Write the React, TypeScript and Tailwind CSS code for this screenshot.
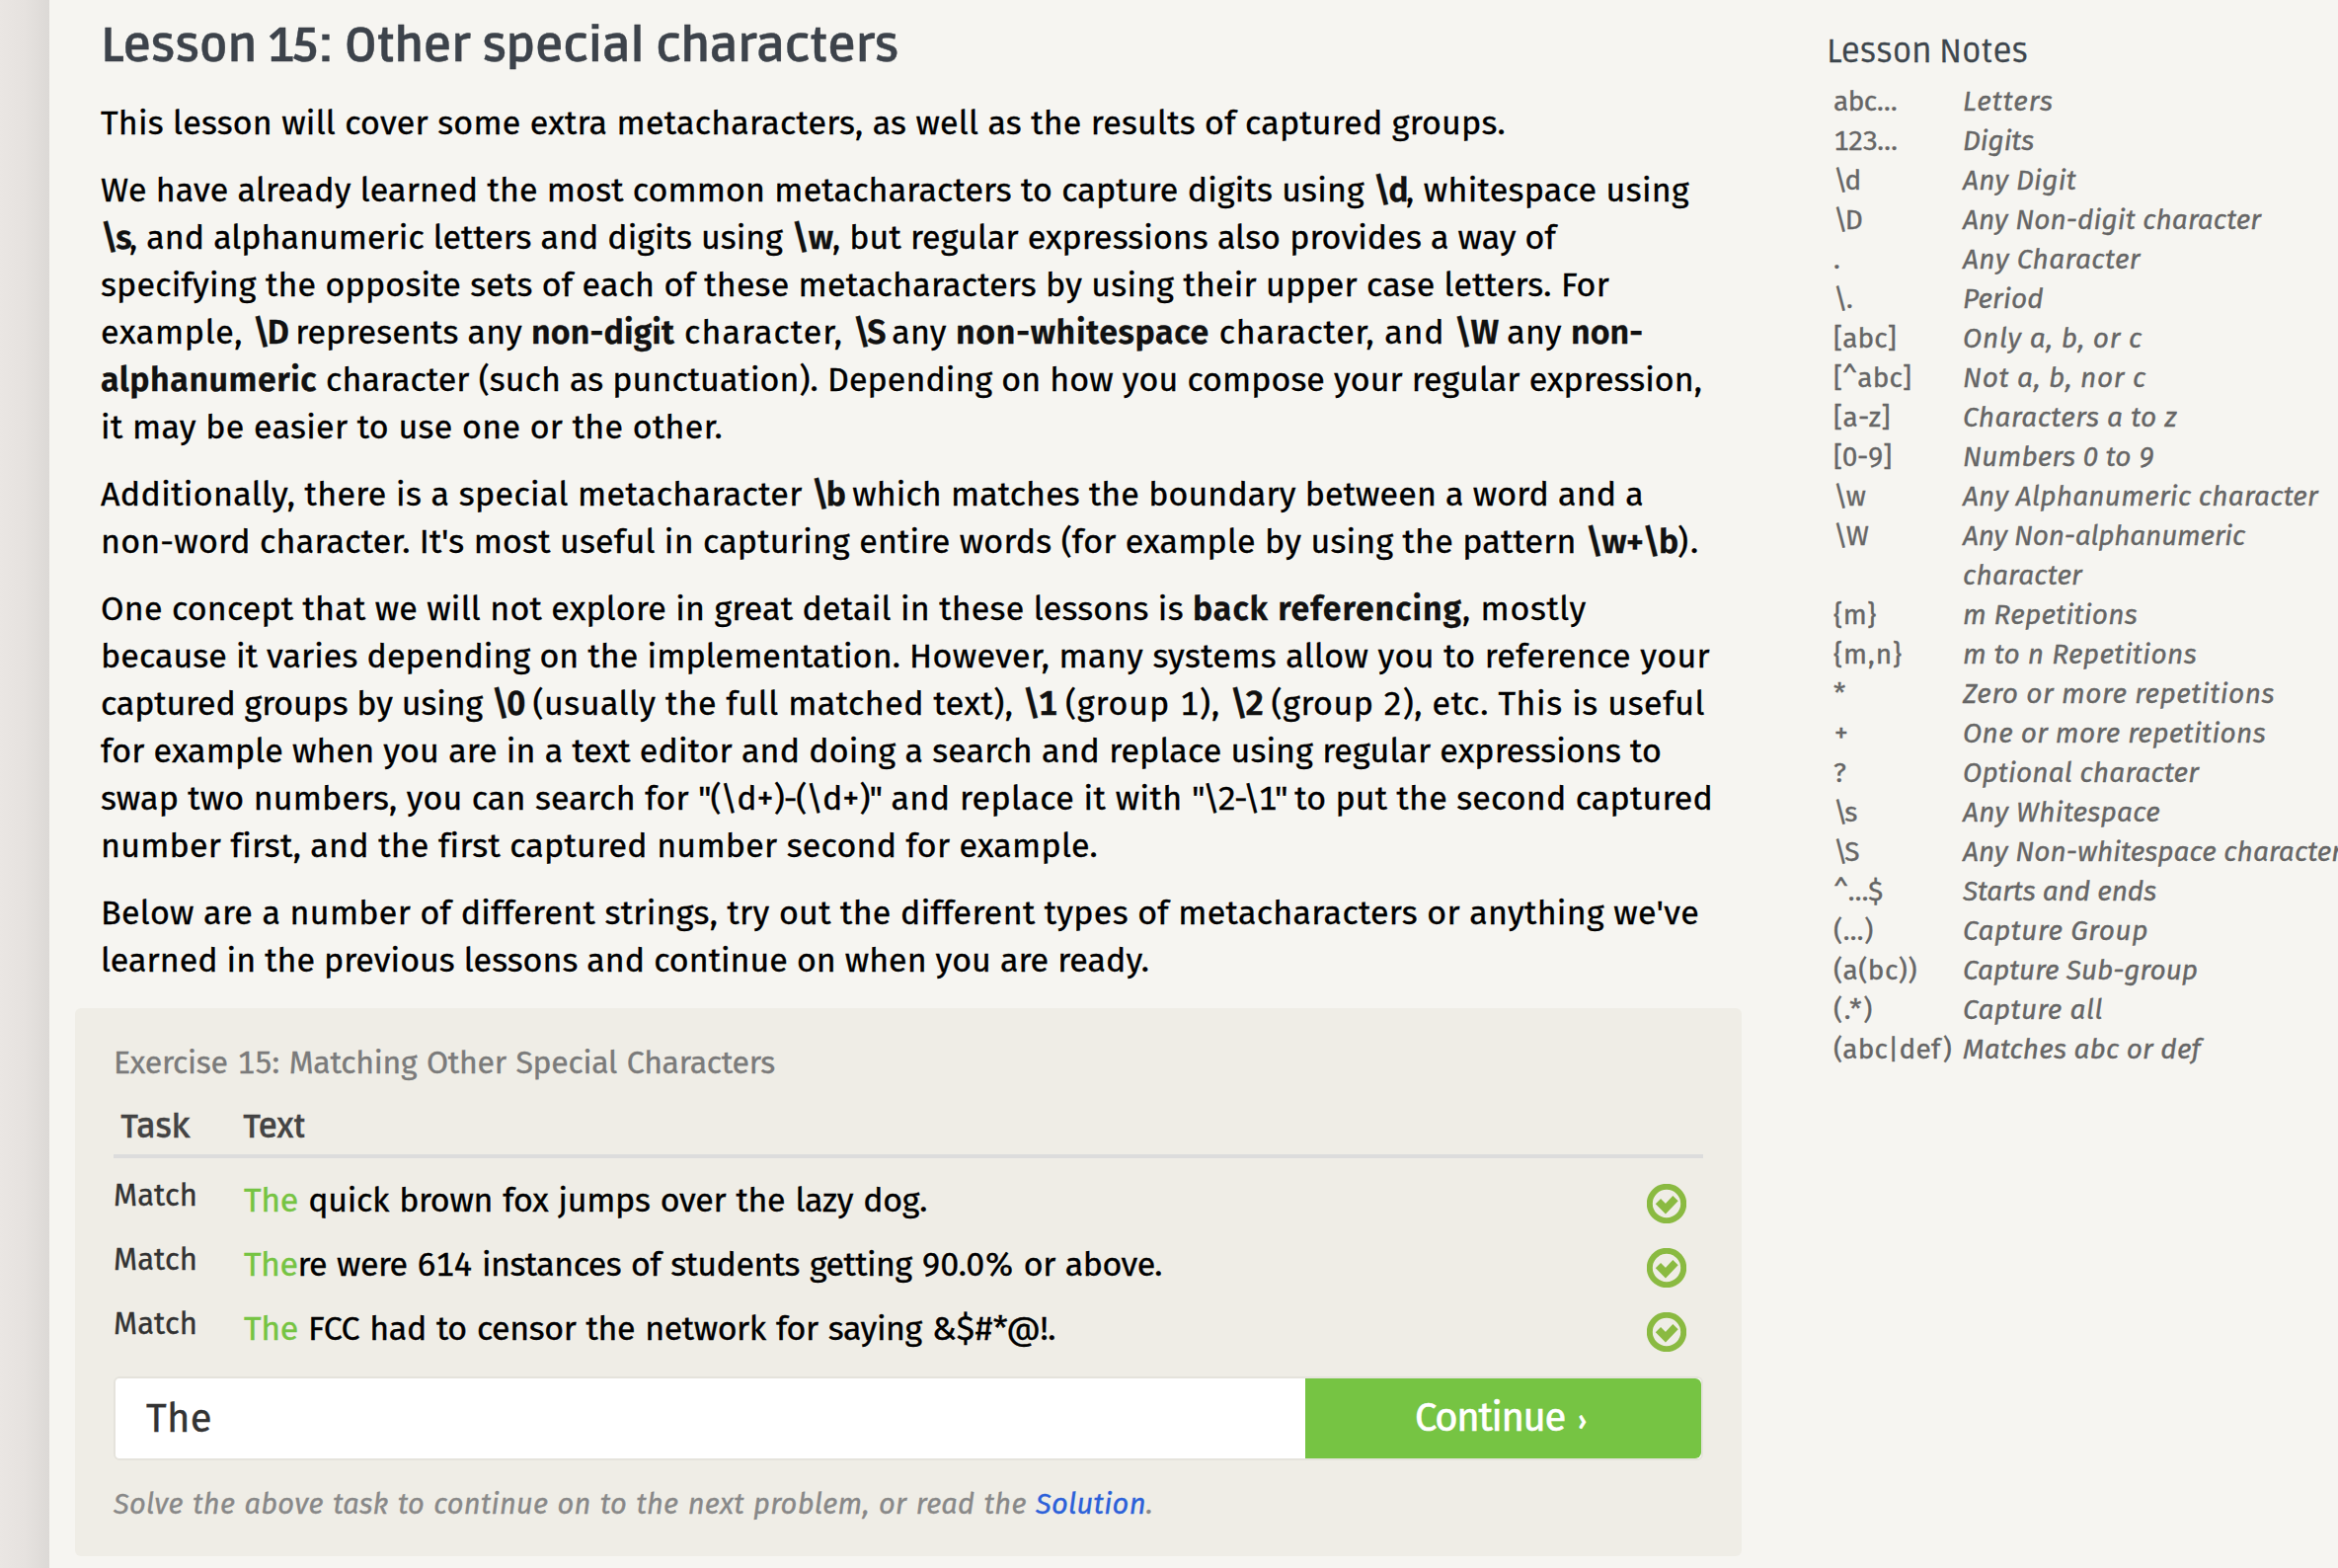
import { useLayoutEffect, useRef, type ReactNode } from "react";

/** A run of text whose tracking is adjusted so that it fills `w` pixels. */
function Fit({ w, className = "", children }: { w: number; className?: string; children: ReactNode }) {
  const ref = useRef<HTMLSpanElement>(null);
  useLayoutEffect(() => {
    const el = ref.current;
    if (!el) return;
    el.style.letterSpacing = "0px";
    const count = (el.textContent ?? "").length;
    if (count > 1) {
      el.style.letterSpacing = `${(w - el.getBoundingClientRect().width) / count}px`;
    }
  }, [w]);
  return (
    <span ref={ref} className={`inline-block whitespace-pre ${className}`}>
      {children}
    </span>
  );
}

type Run = [number, string, "b"?];
type Line = [number, string];

const paragraphs: Run[][][] = [
  [[[1423, "This lesson will cover some extra metacharacters, as well as the results of captured groups."]]],
  [
    [[1289, "We have already learned the most common metacharacters to capture digits using "], [33, "\\d", "b"], [287, ", whitespace using"]],
    [[29, "\\s", "b"], [671, ", and alphanumeric letters and digits using "], [41, "\\w", "b"], [733, ", but regular expressions also provides a way of"]],
    [[1528, "specifying the opposite sets of each of these metacharacters by using their upper case letters. For"]],
    [
      [154, "example, "], [34, "\\D", "b"], [248, " represents any "], [145, "non-digit", "b"], [181, " character, "], [30, "\\S", "b"],
      [74, " any "], [257, "non-whitespace", "b"], [248, " character, and "], [44, "\\W", "b"], [74, " any "], [73, "non-", "b"],
    ],
    [[219, "alphanumeric", "b"], [1403, " character (such as punctuation). Depending on how you compose your regular expression,"]],
    [[630, "it may be easier to use one or the other."]],
  ],
  [
    [[720, "Additionally, there is a special metacharacter "], [32, "\\b", "b"], [811, " which matches the boundary between a word and a"]],
    [[1504, "non-word character. It's most useful in capturing entire words (for example by using the pattern "], [93, "\\w+\\b", "b"], [23, ")."]],
  ],
  [
    [[1106, "One concept that we will not explore in great detail in these lessons is "], [273, "back referencing", "b"], [126, ", mostly"]],
    [[819, "because it varies depending on the implementation. "], [811, "However, many systems allow you to reference your"]],
    [
      [396, "captured groups by using "], [32, "\\0", "b"], [506, " (usually the full matched text), "], [33, "\\1", "b"],
      [177, " (group 1), "], [32, "\\2", "b"], [449, " (group 2), etc. This is useful"],
    ],
    [[1581, "for example when you are in a text editor and doing a search and replace using regular expressions to"]],
    [
      [605, "swap two numbers, you can search for "], [186, "\"(\\d+)-(\\d+)\""], [314, " and replace it with "],
      [95, "\"\\2-\\1\""], [433, " to put the second captured"],
    ],
    [[1007, "number first, and the first captured number second for example."]],
  ],
  [
    [[1619, "Below are a number of different strings, try out the different types of metacharacters or anything we've"]],
    [[1062, "learned in the previous lessons and continue on when you are ready."]],
  ],
];

const notes: [string, number, Line[]][] = [
  ["abc…", 64, [[92, "Letters"]]],
  ["123…", 64, [[72, "Digits"]]],
  ["\\d", 25, [[115, "Any Digit"]]],
  ["\\D", 27, [[302, "Any Non-digit character"]]],
  [".", 10, [[180, "Any Character"]]],
  ["\\.", 18, [[82, "Period"]]],
  ["[abc]", 64, [[182, "Only a, b, or c"]]],
  ["[^abc]", 79, [[186, "Not a, b, nor c"]]],
  ["[a-z]", 58, [[217, "Characters a to z"]]],
  ["[0-9]", 59, [[194, "Numbers 0 to 9"]]],
  ["\\w", 31, [[360, "Any Alphanumeric character"]]],
  ["\\W", 34, [[286, "Any Non-alphanumeric"], [121, "character"]]],
  ["{m}", 44, [[177, "m Repetitions"]]],
  ["{m,n}", 70, [[237, "m to n Repetitions"]]],
  ["*", 10, [[316, "Zero or more repetitions"]]],
  ["+", 15, [[307, "One or more repetitions"]]],
  ["?", 10, [[239, "Optional character"]]],
  ["\\s", 21, [[200, "Any Whitespace"]]],
  ["\\S", 23, [[384, "Any Non-whitespace character"]]],
  ["^…$", 50, [[196, "Starts and ends"]]],
  ["(…)", 41, [[188, "Capture Group"]]],
  ["(a(bc))", 85, [[238, "Capture Sub-group"]]],
  ["(.*)", 41, [[142, "Capture all"]]],
  ["(abc|def)", 120, [[241, "Matches abc or def"]]],
];

const tasks: [number, string, string][] = [
  [692, "The", " quick brown fox jumps over the lazy dog."],
  [930, "The", "re were 614 instances of students getting 90.0% or above."],
  [822, "The", " FCC had to censor the network for saying &$#*@!."],
];

function CheckBadge() {
  return (
    <svg viewBox="0 0 40 40" className="size-10">
      <circle cx="20" cy="20" r="17.2" fill="none" stroke="#8aba41" strokeWidth="6" />
      <path d="M11.4 17.6 L18.9 25.2 L29 14.6" fill="none" stroke="#8aba41" strokeWidth="7.4" />
    </svg>
  );
}

export default function App() {
  return (
    <div className="flex h-[1588px] w-[2368px] overflow-hidden bg-[#f6f5f1] font-['Fira_Sans','Lato',sans-serif] tabular-nums [-webkit-text-stroke:0.35px]">
      <div className="w-[50px] shrink-0 bg-linear-to-r from-[#eae6e3] via-[#e6e2df] via-50% to-[#dcd9d6]" />

      <main className="w-[1714px] shrink-0 pl-[26px]">
        <div className="pl-[26px]">
          <h1 className="h-[101px] pt-[13px] font-['Ruda','Open_Sans',sans-serif] text-[49px] leading-[68px] font-bold text-[#3d434b] [-webkit-text-stroke:0.4px]">
            <Fit w={808}>Lesson 15: Other special characters</Fit>
          </h1>
          {paragraphs.map((lines, i) => (
            <p key={i} className="mb-5 text-[34px] leading-[48px] text-black">
              {lines.map((runs, j) => (
                <span key={j} className="block h-12 whitespace-nowrap">
                  {runs.map(([w, text, bold], k) => (
                    <Fit key={k} w={w} className={bold ? "font-semibold text-[#111]" : ""}>{text}</Fit>
                  ))}
                </span>
              ))}
            </p>
          ))}
        </div>

        <section className="mt-6 h-[555px] rounded-md bg-[#efede6] px-[39px] pt-[31px] [word-spacing:1.5px]">
          <h2 className="h-12 text-[32px] leading-[48px] text-[#7b7b7b]">
            <Fit w={670}>Exercise 15: Matching Other Special Characters</Fit>
          </h2>
          <div className="mt-[14px] flex h-[59px] border-b-4 border-[#dcdcdc] pt-[2px] font-['Ruda','Open_Sans',sans-serif] text-[33px] leading-[53px] font-bold text-[#444]">
            <div className="w-[132px] pl-[8px]"><Fit w={69}>Task</Fit></div>
            <div><Fit w={62}>Text</Fit></div>
          </div>
          <div className="pt-[15px]">
            {tasks.map(([w, hit, rest]) => (
              <div key={rest} className="flex h-[65px]">
                <div className="w-[132px] pt-px text-[31px] leading-[44px] text-[#333]"><Fit w={85}>Match</Fit></div>
                <div className="flex-1 pt-[4px] text-[34px] leading-[48px] text-black">
                  <Fit w={w}><span className="text-[#76c443]">{hit}</span>{rest}</Fit>
                </div>
                <div className="pt-[11px] pr-[17px]"><CheckBadge /></div>
              </div>
            ))}
          </div>
          <div className="mt-[11px] flex h-[85px] overflow-hidden rounded-md border-2 border-[#e5e3dc] bg-white">
            <div className="flex-1 pt-px pl-[31px] text-[40px] leading-[80px] text-[#333]"><Fit w={67}>The</Fit></div>
            <button className="flex w-[401px] gap-[13px] rounded-r-md bg-[#76c443] pl-[111px] text-[40px] leading-[80px] text-white [-webkit-text-stroke:0.6px]">
              <Fit w={152}>Continue</Fit>
              <span className="pt-px font-['Lato',sans-serif] text-[32px] font-bold">›</span>
            </button>
          </div>
          <p className="mt-[23px] text-[29px] leading-[44px] text-[#888] italic">
            <Fit w={1053}>Solve the above task to continue on to the next problem, or read the <a className="text-[#2b60d9]">Solution</a>.</Fit>
          </p>
        </section>
      </main>

      <aside className="shrink-0 pt-[27px] pl-[86px]">
        <h3 className="h-[56px] font-['Ruda','Open_Sans',sans-serif] text-[34px] leading-[51px] text-[#3d464d]">
          <Fit w={204}>Lesson Notes</Fit>
        </h3>
        <div className="pl-[8px] text-[28px] leading-[40px] text-[#666]">
          {notes.map(([code, cw, lines]) => (
            <div key={code} className="flex">
              <div className="-ml-px w-[131px] shrink-0"><Fit w={cw}>{code}</Fit></div>
              <div className="italic">
                {lines.map(([w, text], i) => (
                  <div key={i} className="h-10"><Fit w={w}>{text}</Fit></div>
                ))}
              </div>
            </div>
          ))}
        </div>
      </aside>
    </div>
  );
}
